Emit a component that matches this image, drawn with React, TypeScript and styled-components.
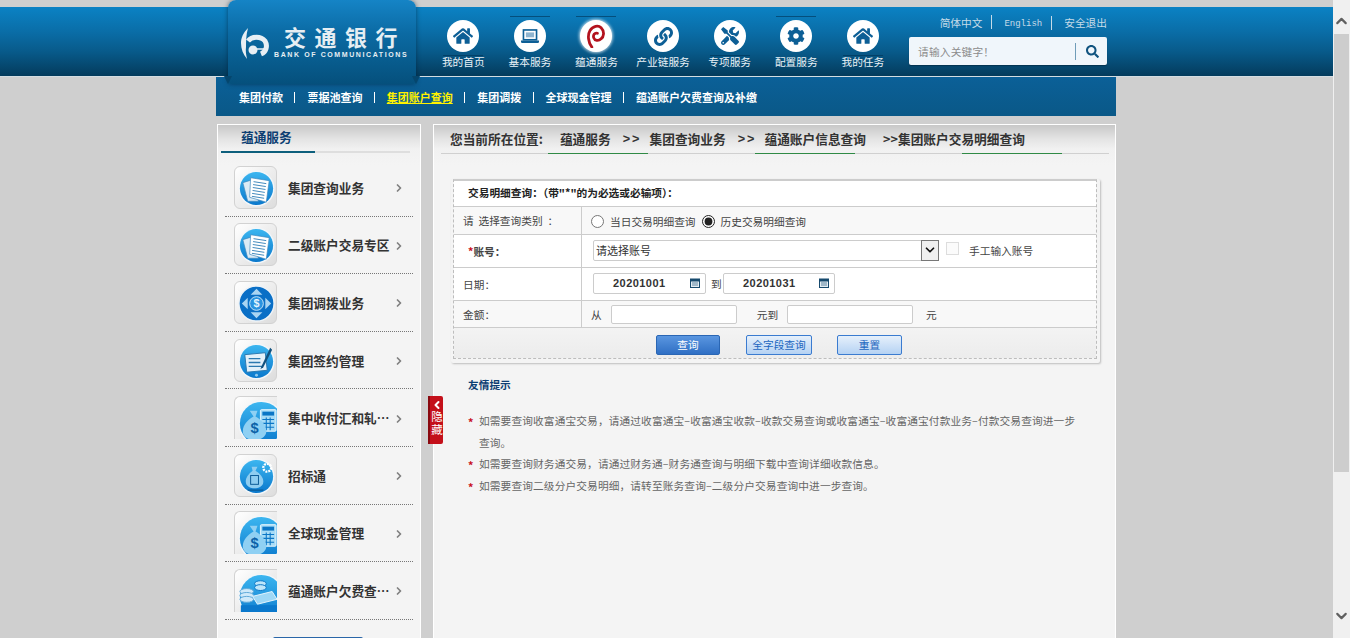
import { FC, ReactNode } from "react";
import styled, { createGlobalStyle } from "styled-components";
import { FaCog, FaHome, FaLink, FaSearch, FaTools } from "react-icons/fa";
import { ChevronDown, ChevronLeft, ChevronRight, ChevronUp } from "lucide-react";

const CJK = `"Noto Sans CJK SC", "Liberation Sans", sans-serif`;

const GlobalStyle = createGlobalStyle`
  html, body {
    margin: 0;
    height: 638px;
    overflow: hidden;
    background: #cfcfcf;
    font-family: ${CJK};
  }
  * { box-sizing: border-box; }
`;

const Screen = styled.div`
  display: flex;
  width: 1350px;
  height: 638px;
  overflow: hidden;
`;

const Page = styled.div`
  flex: 1;
  min-width: 0;
  padding-top: 7px;
  background: #cfcfcf;
`;

const ScrollBar = styled.div`
  width: 17px;
  display: flex;
  flex-direction: column;
  align-items: center;
  background: #f0f0f0;
  color: #606060;
`;

const ScrollArrow = styled.div<{ $pad: string }>`
  height: 34px;
  width: 100%;
  display: flex;
  justify-content: center;
  align-items: center;
  padding: ${(p) => p.$pad};
`;

const ScrollThumb = styled.div`
  width: 15px;
  height: 438px;
  background: #cdcdcd;
`;

const ScrollGap = styled.div`
  flex: 1;
`;

const HeaderBand = styled.header`
  height: 69px;
  background: linear-gradient(#0b82c4 0%, #0a6ea8 35%, #085a8a 65%, #043b5c 100%);
`;

const Shell = styled.div`
  width: 900px;
  margin-left: 216px;
`;

const HeaderInner = styled(Shell)`
  position: relative;
  height: 69px;
  display: flex;
`;

const LogoTab = styled.div`
  position: absolute;
  left: 12px;
  top: -7px;
  width: 188px;
  height: 84px;
  z-index: 3;
  display: flex;
  align-items: flex-start;
  padding: 27px 0 0 13px;
  gap: 13px;
  border-radius: 8px 8px 3px 3px;
  background: linear-gradient(#1584c6 0%, #0b6aa3 40%, #05507c 100%);
  box-shadow: 0 0 5px rgba(0, 30, 50, 0.55);

  &::before,
  &::after {
    content: "";
    position: absolute;
    bottom: 0;
    border-style: solid;
    border-width: 8px 4px 0;
    border-color: #05466d transparent transparent;
  }
  &::before { left: -4px; }
  &::after { right: -4px; }
`;

const LogoWords = styled.div`
  display: flex;
  flex-direction: column;
  margin-top: -2px;
  color: #e6eef3;
`;

const LogoCn = styled.div`
  font-size: 22px;
  font-weight: 700;
  line-height: 23px;
  letter-spacing: 8.5px;
  white-space: nowrap;
`;

const LogoEn = styled.div`
  margin: 2px 0 0 -10px;
  font: bold 7px/10px "Liberation Sans", sans-serif;
  letter-spacing: 1.6px;
  white-space: nowrap;
`;

const TopNav = styled.nav`
  display: flex;
  margin-left: 214px;
`;

const TopNavItem = styled.a`
  width: 66.6px;
  display: flex;
  flex-direction: column;
  align-items: center;
  padding-top: 9px;
  color: #eaf2f7;
  font-size: 10.7px;
  line-height: 14px;
  white-space: nowrap;
`;

const IconCell = styled.div<{ $edge?: "top" | "bottom" }>`
  width: 40px;
  height: 40px;
  display: flex;
  align-items: center;
  justify-content: center;
  margin-bottom: -1px;
  border-top: 1px solid ${(p) => (p.$edge === "top" ? "rgba(0, 50, 85, 0.6)" : "transparent")};
  border-bottom: 1px solid ${(p) => (p.$edge === "bottom" ? "rgba(0, 50, 85, 0.6)" : "transparent")};
`;

const IconDisc = styled.div<{ $glow?: boolean }>`
  width: 32px;
  height: 32px;
  border-radius: 50%;
  background: #fff;
  color: #0d5f96;
  display: flex;
  align-items: center;
  justify-content: center;
  box-shadow: ${(p) => (p.$glow ? "0 0 3px 1px rgba(255,255,255,0.7)" : "none")};
`;

const HeaderRight = styled.div`
  margin-left: auto;
  margin-right: 9px;
  width: 198px;
  display: flex;
  flex-direction: column;
  align-items: flex-end;
`;

const LangBar = styled.div`
  height: 30px;
  display: flex;
  align-items: center;
  color: #c5dbe8;
  font-size: 10.7px;
  white-space: nowrap;
`;

const LangLink = styled.span<{ $mono?: boolean }>`
  font-family: ${(p) => (p.$mono ? `"Liberation Mono", monospace` : "inherit")};
  font-size: ${(p) => (p.$mono ? "9px" : "inherit")};
  &:not(:first-child)::before {
    content: "";
    display: inline-block;
    width: 1px;
    height: 14px;
    margin: 0 12px 0 9px;
    background: #c5dbe8;
    vertical-align: -3px;
  }
`;

const SearchBox = styled.div`
  width: 198px;
  height: 28px;
  display: flex;
  align-items: center;
  padding: 0 8px 0 9px;
  border-radius: 2px;
  background: #f0f6fb;
  box-shadow: 0 1px 1px rgba(0, 30, 50, 0.5);
`;

const SearchHint = styled.span`
  flex: 1;
  color: #8c8c8c;
  font-size: 10.7px;
  letter-spacing: 0.2px;
`;

const SearchIcon = styled.span`
  display: flex;
  align-items: center;
  height: 17px;
  padding-left: 10px;
  border-left: 1px solid #6f9cb8;
  color: #10537f;
`;

const HeaderLine = styled.div`
  height: 1px;
  background: #d4dde2;
`;

const SubNav = styled(Shell)`
  height: 39px;
  display: flex;
  align-items: center;
  padding-left: 23px;
  background: linear-gradient(#0b6098, #0a5887);
`;

const SubNavLink = styled.a<{ $active?: boolean }>`
  font-size: 11px;
  font-weight: 700;
  white-space: nowrap;
  color: ${(p) => (p.$active ? "#fff200" : "#fff")};
  text-decoration: ${(p) => (p.$active ? "underline" : "none")};
  &:not(:first-child) {
    margin-left: 11.4px;
  }
  &:not(:first-child)::before {
    content: "";
    display: inline-block;
    width: 1px;
    height: 11px;
    margin-right: 12px;
    background: #fff;
    vertical-align: -1px;
  }
`;

const Columns = styled(Shell)`
  display: flex;
  gap: 12px;
  margin-top: 8px;
  padding-left: 1px;
`;

const PanelTop = `
  background: linear-gradient(#c8c8c8 0, #e4e4e4 14px, #f1f1f1 24px, #f4f4f4 40px);
  border: 1px solid #fff;
`;

const Sidebar = styled.aside`
  width: 204px;
  height: 520px;
  overflow: hidden;
  ${PanelTop}
`;

const SideTitle = styled.div`
  height: 21px;
  padding-left: 23px;
  margin-top: 1px;
  color: #0d3f73;
  font-size: 12.7px;
  font-weight: 700;
  line-height: 22px;
`;

const SideRule = styled.div`
  height: 2px;
  margin: 4px 10px 0 3px;
  background: linear-gradient(90deg, #0d5f7c 94px, #dedede 94px);
`;

const SideList = styled.div`
  margin: 6px 7px 0 7px;
`;

const SideItem = styled.a`
  height: 57.6px;
  display: flex;
  align-items: center;
  padding: 0 8px 0 9px;
  border-bottom: 1px dotted #777;
  color: #333;
  font-size: 12.7px;
  font-weight: 700;
`;

const SideTile = styled.div<{ $open?: boolean }>`
  width: 43px;
  height: 43px;
  flex: none;
  overflow: hidden;
  margin-right: 11px;
  border: 1px solid #d2d2d2;
  border-width: ${(p) => (p.$open ? "1px 0 0 1px" : "1px")};
  border-radius: ${(p) => (p.$open ? "6px 0 0 0" : "6px")};
  background: linear-gradient(135deg, #fff, #dcdcdc);
`;

const SideLabel = styled.span`
  flex: 1;
  min-width: 0;
  overflow: hidden;
  white-space: nowrap;
  text-overflow: ellipsis;
`;

const SideArrow = styled.span`
  display: flex;
  flex: none;
  margin: 2px 0 0 2px;
  color: #808080;
`;

const SideButton = styled.div`
  width: 90px;
  height: 10px;
  margin: 17px 0 0 55px;
  border-radius: 2px 2px 0 0;
  background: #2a66a8;
`;

const Main = styled.main`
  position: relative;
  width: 683px;
  height: 520px;
  padding: 0 6px 0 7px;
  ${PanelTop}
`;

const HideTab = styled.div`
  position: absolute;
  left: -6px;
  top: 271px;
  width: 15px;
  height: 48px;
  padding-top: 3px;
  display: flex;
  flex-direction: column;
  align-items: center;
  border-radius: 0 2px 2px 0;
  background: #c4101a;
  border-left: 2px solid #8a0a10;
  color: #fff;
  font-size: 11.5px;
  line-height: 13px;
`;

const HideWord = styled.span`
  writing-mode: vertical-rl;
  letter-spacing: 1.5px;
`;

const Crumbs = styled.div`
  height: 27px;
  padding: 0 0 0 9px;
  display: flex;
  align-items: center;
  color: #333;
  font-size: 12.7px;
  font-weight: 700;
  white-space: nowrap;
`;

const CrumbPart = styled.span<{ $gap: number }>`
  margin-left: ${(p) => p.$gap}px;
`;

const CrumbSep = styled(CrumbPart)`
  font-family: "Liberation Sans", sans-serif;
  letter-spacing: 2px;
`;

const CrumbRule = styled.div`
  height: 1px;
  display: flex;
  gap: 107px;
  padding-left: 107px;
  margin-top: 1px;
  background: #d0d0d0;
`;

const CrumbMark = styled.i`
  width: 100px;
  height: 1px;
  background: #2f8a45;
`;

const FormCard = styled.section`
  width: 649px;
  height: 184px;
  margin: 25px 0 0 10px;
  padding: 0 3px 4px 2px;
  border-radius: 2px;
  background: #f4f4f4;
  box-shadow: 1px 1px 2px #bdbdbd;
`;

const FormInner = styled.div`
  border: 1px dashed #bdbdbd;
  border-top: 2px solid #ccc;
`;

const FormRow = styled.div<{ $height: number; $shade?: boolean }>`
  height: ${(p) => p.$height}px;
  display: grid;
  grid-template-columns: 128px 1fr;
  border-bottom: 1px solid #ccc;
  background: ${(p) => (p.$shade ? "#f8f8f8" : "#fff")};
  color: #444;
  font-size: 10.7px;
`;

const FormTitle = styled.div`
  height: 26px;
  display: flex;
  align-items: center;
  padding: 0 0 2px 14px;
  border-bottom: 1px solid #ccc;
  background: #fff;
  color: #222;
  font-size: 10.7px;
  font-weight: 700;
`;

const LabelCell = styled.div<{ $strong?: boolean }>`
  display: flex;
  align-items: center;
  padding-left: ${(p) => (p.$strong ? "14px" : "9px")};
  border-right: 1px solid #ccc;
  font-weight: ${(p) => (p.$strong ? 700 : 400)};
  white-space: pre;
`;

const Required = styled.span`
  color: #c80f1e;
  font-weight: 700;
`;

const FieldCell = styled.div<{ $nudge?: number }>`
  display: flex;
  align-items: center;
  padding-left: 11px;
  padding-top: ${(p) => Math.max(p.$nudge ?? 0, 0)}px;
  padding-bottom: ${(p) => Math.max(-(p.$nudge ?? 0), 0)}px;
  white-space: nowrap;
`;

const Radio = styled.input.attrs({ type: "radio" })`
  width: 13px;
  height: 13px;
  margin: 0 6px 0 -2px;
  accent-color: #222;
`;

const RadioText = styled.span`
  margin-right: 8px;
`;

const SelectBox = styled.div`
  width: 346px;
  height: 21px;
  display: flex;
  align-items: center;
  padding-left: 2px;
  border: 1px solid #ccc;
  border-radius: 2px 0 0 2px;
  background: #fff;
  color: #333;
  font-size: 11px;
`;

const SelectText = styled.span`
  flex: 1;
`;

const SelectArrow = styled.span`
  width: 18px;
  height: 21px;
  margin-right: -1px;
  display: flex;
  align-items: center;
  justify-content: center;
  border: 1px solid #777;
  background: #f0f0f0;
  color: #111;
`;

const ManualCheck = styled.span`
  width: 13px;
  height: 13px;
  margin: 0 10px 4px 7px;
  border: 1px solid #ddd;
  background: #fbfbfb;
`;

const DateInput = styled.div<{ $width: number }>`
  width: ${(p) => p.$width}px;
  height: 21px;
  flex: none;
  display: flex;
  align-items: center;
  padding: 0 5px 0 19px;
  border: 1px solid #ccc;
  border-radius: 2px;
  background: #fff;
  color: #333;
  font: bold 11px "Liberation Sans", sans-serif;
  letter-spacing: 0.45px;
`;

const DateValue = styled.span`
  flex: 1;
`;

const DateLink = styled.span`
  width: 12px;
  margin: 0 0 0 5px;
`;

const AmountInput = styled.div`
  width: 126px;
  height: 19px;
  border: 1px solid #ccc;
  border-radius: 2px;
  background: #fff;
`;

const AmountWord = styled.span<{ $left: number; $right: number }>`
  margin: 0 ${(p) => p.$right}px 0 ${(p) => p.$left}px;
`;

const ButtonRow = styled.div`
  height: 30px;
  display: flex;
  align-items: center;
  padding: 3px 0 0 202px;
  background: linear-gradient(#f3f3f3, #ececec);
`;

const ActionButton = styled.button<{ $primary?: boolean; $width: number; $gap: number }>`
  width: ${(p) => p.$width}px;
  height: 20px;
  margin-right: ${(p) => p.$gap}px;
  padding: 0;
  border: 1px solid ${(p) => (p.$primary ? "#2a66b4" : "#3a7bd0")};
  border-radius: 2px;
  background: ${(p) =>
    p.$primary ? "linear-gradient(#5a96e0, #2f6fc4)" : "linear-gradient(#e6f0fb, #b5d2f3)"};
  color: ${(p) => (p.$primary ? "#fff" : "#1c66c0")};
  font: 10.7px ${CJK};
`;

const TipTitle = styled.h4`
  margin: 15px 0 0 27px;
  color: #0d3f73;
  font-size: 10.7px;
  line-height: 14px;
  font-weight: 700;
`;

const TipList = styled.ul`
  list-style: none;
  width: 611px;
  margin: 18px 0 0 27px;
  padding: 0;
  color: #666;
  font-size: 10.7px;
  letter-spacing: 0.12px;
  line-height: 21.7px;
`;

const TipItem = styled.li`
  position: relative;
  padding-left: 11px;
  &::before {
    content: "*";
    position: absolute;
    left: 0;
    top: 2px;
    color: #c80f1e;
    font-weight: 700;
  }
`;

const CalendarIcon: FC = () => (
  <svg width="10" height="10" viewBox="0 0 10 10">
    <rect x="0.5" y="1" width="9" height="8.5" fill="#e4edf3" stroke="#174a6e" />
    <rect x="0.5" y="1" width="9" height="2.5" fill="#174a6e" />
    <path d="M2 5h6M2 7h6" stroke="#5d84a0" strokeWidth="1" />
  </svg>
);

const BankLogo: FC = () => (
  <svg width="30" height="32" viewBox="0 0 30 32">
    <path fill="#e8eff4" d="M7 1C2 6 0 11 0 16C0 22 2 27 6 32C5 27 4.500 24 5 20C5 15 5 8 7 1Z" />
    <path fill="none" stroke="#e8eff4" strokeWidth="5" d="M7 14C11 9 20 9 24 14C27 19 25 25 20 27" />
    <path fill="none" stroke="#e8eff4" strokeWidth="1.500" d="M12 22h11" />
    <circle cx="12" cy="23" r="4.500" fill="#e8eff4" />
  </svg>
);

const LaptopIcon: FC = () => (
  <svg width="18" height="15" viewBox="0 0 22 18">
    <rect x="3" y="1" width="16" height="12" fill="none" stroke="#0d5f96" strokeWidth="2" />
    <rect x="6" y="4" width="10" height="6" fill="#8fb4cf" />
    <path d="M0 14h22v1.500a1.500 1.500 0 0 1-1.500 1.500h-19a1.500 1.500 0 0 1-1.500-1.500z" fill="#0d5f96" />
  </svg>
);

const SwirlIcon: FC = () => (
  <svg width="19" height="24" viewBox="0 0 20 26">
    <path
      fill="none"
      stroke="#b3121d"
      strokeWidth="3"
      strokeLinecap="round"
      d="M5 25C1 20 0 12 3 7C6 2 12 1 15 4C19 8 18 14 15 16C12 19 8 18 7 15C6 12 8 9 11 10"
    />
  </svg>
);

const Orb: FC<{ id: string; cx?: number; cy?: number; r?: number }> = ({ id, cx = 22, cy = 22, r = 17 }) => (
  <>
    <defs>
      <linearGradient id={id} x1="0" y1="0" x2="0" y2="1">
        <stop offset="0" stopColor="#3cb6f0" />
        <stop offset="1" stopColor="#0a78cc" />
      </linearGradient>
    </defs>
    <circle cx={cx} cy={cy} r={r + 1.500} fill="#f2f6f9" />
    <circle cx={cx} cy={cy} r={r} fill={`url(#${id})`} />
  </>
);

const DocsIcon: FC<{ id: string }> = ({ id }) => (
  <svg width="43" height="43" viewBox="0 0 44 44">
    <Orb id={id} />
    <polygon points="8,16 18,13 24,35 13,35" fill="#dcebf5" stroke="#3f87bb" strokeWidth="0.700" />
    <polygon points="16,11 35,14 32,36 15,31" fill="#fff" stroke="#3f87bb" strokeWidth="0.700" />
    <path d="M19 15l13 2M18.500 18l13 2M18.200 21l13 2M18 24l12.500 2M17.500 27l12.500 2M17.300 30l12.500 2" stroke="#3f87bb" strokeWidth="1" />
  </svg>
);

const TransferIcon: FC = () => (
  <svg width="43" height="43" viewBox="0 0 44 44">
    <circle cx="22" cy="22" r="18" fill="#0a6fc6" stroke="#eef3f7" strokeWidth="1.500" />
    <path d="M22 7l6 6H16zM22 37l-6-6h12zM7 22l6-6v12zM37 22l-6 6V16z" fill="#a9d4f2" />
    <circle cx="22" cy="22" r="7" fill="#2a93e0" stroke="#c6e4f8" />
    <text x="22" y="26" textAnchor="middle" fontSize="11" fill="#e6f4fd" fontFamily="Liberation Sans">$</text>
  </svg>
);

const SignIcon: FC<{ id: string }> = ({ id }) => (
  <svg width="43" height="43" viewBox="0 0 44 44">
    <Orb id={id} />
    <polygon points="10,15 31,13 33,31 12,33" fill="#e3f1fa" stroke="#2b79b0" />
    <path d="M14 19h12M14 23h12M14 27h14" stroke="#2b79b0" strokeWidth="1.400" />
    <path d="M36 8L27 27l-1 3 3-2L38 10z" fill="#12527f" />
    <circle cx="22" cy="36" r="1.500" fill="#8cc9ef" />
  </svg>
);

const BagIcon: FC<{ id: string }> = ({ id }) => (
  <svg width="43" height="43" viewBox="0 0 44 44">
    <Orb id={id} cx={27} cy={27} r={22} />
    <rect x="26" y="13" width="16" height="22" rx="1" fill="#a6dbf6" stroke="#e9f6fd" />
    <rect x="28" y="15" width="12" height="4" fill="#0b76c6" />
    <path d="M28 23h12M28 27h12M28 31h12M32 21v13M36 21v13" stroke="#0b76c6" strokeWidth="1.100" />
    <path d="M15 14l8 0-2 6c6 3 11 9 11 15 0 6-6 9-12 9s-12-3-12-9c0-6 5-12 11-15z" fill="#8fd0f3" />
    <text x="20" y="37" textAnchor="middle" fontSize="15" fill="#0b62a8" fontFamily="Liberation Sans">$</text>
  </svg>
);

const TenderIcon: FC<{ id: string }> = ({ id }) => (
  <svg width="43" height="43" viewBox="0 0 44 44">
    <Orb id={id} />
    <path d="M17 12h6l-2 4c5 3 8 7 8 11 0 5-5 7-9 7s-9-2-9-7c0-4 3-8 7-11z" fill="#8fcdf0" />
    <path d="M13 36h16" stroke="#0b5a96" strokeWidth="1.400" />
    <circle cx="33" cy="13" r="4" fill="none" stroke="#fff" strokeWidth="2.400" strokeDasharray="2 1" />
    <rect x="16" y="21" width="8" height="9" fill="none" stroke="#0b5a96" />
  </svg>
);

const CoinsIcon: FC<{ id: string }> = ({ id }) => (
  <svg width="43" height="43" viewBox="0 0 44 44">
    <Orb id={id} cx={27} cy={27} r={22} />
    <ellipse cx="26" cy="14" rx="6" ry="3" fill="#bfe6fa" stroke="#0b76c6" />
    <ellipse cx="26" cy="18" rx="6" ry="3" fill="#bfe6fa" stroke="#0b76c6" />
    <ellipse cx="12" cy="22" rx="7" ry="3" fill="#cfeafa" stroke="#5fa9d8" />
    <ellipse cx="12" cy="26" rx="7" ry="3" fill="#cfeafa" stroke="#5fa9d8" />
    <ellipse cx="12" cy="30" rx="7" ry="3" fill="#cfeafa" stroke="#5fa9d8" />
    <polygon points="18,27 38,22 43,30 23,35" fill="#9fd8f6" stroke="#e5f5fd" />
    <rect x="6" y="36" width="38" height="8" fill="#0a78cc" />
  </svg>
);

const navItems: { label: string; icon: ReactNode; edge?: "top" | "bottom"; glow?: boolean }[] = [
  { label: "我的首页", icon: <FaHome size={20} />, edge: "bottom" },
  { label: "基本服务", icon: <LaptopIcon />, edge: "top" },
  { label: "蕴通服务", icon: <SwirlIcon />, edge: "top", glow: true },
  { label: "产业链服务", icon: <FaLink size={19} /> },
  { label: "专项服务", icon: <FaTools size={18} />, edge: "bottom" },
  { label: "配置服务", icon: <FaCog size={18} />, edge: "top" },
  { label: "我的任务", icon: <FaHome size={20} />, edge: "bottom" },
];

const subNavItems = ["集团付款", "票据池查询", "集团账户查询", "集团调拨", "全球现金管理", "蕴通账户欠费查询及补缴"];

const sideItems: { label: string; icon: ReactNode; open?: boolean }[] = [
  { label: "集团查询业务", icon: <DocsIcon id="orb-a" /> },
  { label: "二级账户交易专区", icon: <DocsIcon id="orb-b" /> },
  { label: "集团调拨业务", icon: <TransferIcon /> },
  { label: "集团签约管理", icon: <SignIcon id="orb-c" /> },
  { label: "集中收付汇和轧差管理", icon: <BagIcon id="orb-d" />, open: true },
  { label: "招标通", icon: <TenderIcon id="orb-e" /> },
  { label: "全球现金管理", icon: <BagIcon id="orb-f" />, open: true },
  { label: "蕴通账户欠费查询及补缴", icon: <CoinsIcon id="orb-g" />, open: true },
];

const tips = [
  "如需要查询收富通宝交易，请通过收富通宝–收富通宝收款–收款交易查询或收富通宝–收富通宝付款业务–付款交易查询进一步查询。",
  "如需要查询财务通交易，请通过财务通–财务通查询与明细下载中查询详细收款信息。",
  "如需要查询二级分户交易明细，请转至账务查询–二级分户交易查询中进一步查询。",
];

export default function App() {
  return (
    <Screen>
      <GlobalStyle />
      <Page>
        <HeaderBand>
          <HeaderInner>
            <LogoTab>
              <BankLogo />
              <LogoWords>
                <LogoCn>交通银行</LogoCn>
                <LogoEn>BANK OF COMMUNICATIONS</LogoEn>
              </LogoWords>
            </LogoTab>
            <TopNav>
              {navItems.map((item) => (
                <TopNavItem key={item.label}>
                  <IconCell $edge={item.edge}>
                    <IconDisc $glow={item.glow}>{item.icon}</IconDisc>
                  </IconCell>
                  {item.label}
                </TopNavItem>
              ))}
            </TopNav>
            <HeaderRight>
              <LangBar>
                <LangLink>简体中文</LangLink>
                <LangLink $mono>English</LangLink>
                <LangLink>安全退出</LangLink>
              </LangBar>
              <SearchBox>
                <SearchHint>请输入关键字！</SearchHint>
                <SearchIcon>
                  <FaSearch size={13} />
                </SearchIcon>
              </SearchBox>
            </HeaderRight>
          </HeaderInner>
        </HeaderBand>
        <HeaderLine />
        <SubNav as="nav">
          {subNavItems.map((label) => (
            <SubNavLink key={label} $active={label === "集团账户查询"}>
              {label}
            </SubNavLink>
          ))}
        </SubNav>
        <Columns>
          <Sidebar>
            <SideTitle>蕴通服务</SideTitle>
            <SideRule />
            <SideList>
              {sideItems.map((item) => (
                <SideItem key={item.label}>
                  <SideTile $open={item.open}>{item.icon}</SideTile>
                  <SideLabel>{item.label}</SideLabel>
                  <SideArrow>
                    <ChevronRight size={12} strokeWidth={3.5} />
                  </SideArrow>
                </SideItem>
              ))}
            </SideList>
            <SideButton />
          </Sidebar>
          <Main>
            <HideTab>
              <ChevronLeft size={12} strokeWidth={4} />
              <HideWord>隐藏</HideWord>
            </HideTab>
            <Crumbs>
              您当前所在位置:
              <CrumbPart $gap={17}>蕴通服务</CrumbPart>
              <CrumbSep $gap={12}>&gt;&gt;</CrumbSep>
              <CrumbPart $gap={8}>集团查询业务</CrumbPart>
              <CrumbSep $gap={12}>&gt;&gt;</CrumbSep>
              <CrumbPart $gap={8}>蕴通账户信息查询</CrumbPart>
              <CrumbPart $gap={17}>&gt;&gt;集团账户交易明细查询</CrumbPart>
            </Crumbs>
            <CrumbRule>
              <CrumbMark />
              <CrumbMark />
              <CrumbMark />
            </CrumbRule>
            <FormCard>
              <FormInner>
                <FormTitle>交易明细查询：（带"*"的为必选或必输项）：</FormTitle>
                <FormRow $height={28} $shade>
                  <LabelCell>请  选择查询类别  ：</LabelCell>
                  <FieldCell $nudge={2}>
                    <Radio name="kind" />
                    <RadioText>当日交易明细查询</RadioText>
                    <Radio name="kind" defaultChecked />
                    <RadioText>历史交易明细查询</RadioText>
                  </FieldCell>
                </FormRow>
                <FormRow $height={33}>
                  <LabelCell $strong>
                    <Required>*</Required>账号：
                  </LabelCell>
                  <FieldCell $nudge={-2}>
                    <SelectBox>
                      <SelectText>请选择账号</SelectText>
                      <SelectArrow>
                        <ChevronDown size={14} strokeWidth={3} />
                      </SelectArrow>
                    </SelectBox>
                    <ManualCheck />
                    手工输入账号
                  </FieldCell>
                </FormRow>
                <FormRow $height={33}>
                  <LabelCell>日期：</LabelCell>
                  <FieldCell $nudge={-2}>
                    <DateInput $width={113}>
                      <DateValue>20201001</DateValue>
                      <CalendarIcon />
                    </DateInput>
                    <DateLink>到</DateLink>
                    <DateInput $width={112}>
                      <DateValue>20201031</DateValue>
                      <CalendarIcon />
                    </DateInput>
                  </FieldCell>
                </FormRow>
                <FormRow $height={27} $shade>
                  <LabelCell>金额：</LabelCell>
                  <FieldCell>
                    <AmountWord $left={-2} $right={9}>从</AmountWord>
                    <AmountInput />
                    <AmountWord $left={20} $right={9}>元到</AmountWord>
                    <AmountInput />
                    <AmountWord $left={13} $right={0}>元</AmountWord>
                  </FieldCell>
                </FormRow>
                <ButtonRow>
                  <ActionButton $primary $width={64} $gap={26}>查询</ActionButton>
                  <ActionButton $width={66} $gap={25}>全字段查询</ActionButton>
                  <ActionButton $width={65} $gap={0}>重置</ActionButton>
                </ButtonRow>
              </FormInner>
            </FormCard>
            <TipTitle>友情提示</TipTitle>
            <TipList>
              {tips.map((tip) => (
                <TipItem key={tip}>{tip}</TipItem>
              ))}
            </TipList>
          </Main>
        </Columns>
      </Page>
      <ScrollBar>
        <ScrollArrow $pad="8px 0 0">
          <ChevronUp size={18} strokeWidth={3} />
        </ScrollArrow>
        <ScrollThumb />
        <ScrollGap />
        <ScrollArrow $pad="0 0 10px">
          <ChevronDown size={18} strokeWidth={3} />
        </ScrollArrow>
      </ScrollBar>
    </Screen>
  );
}
